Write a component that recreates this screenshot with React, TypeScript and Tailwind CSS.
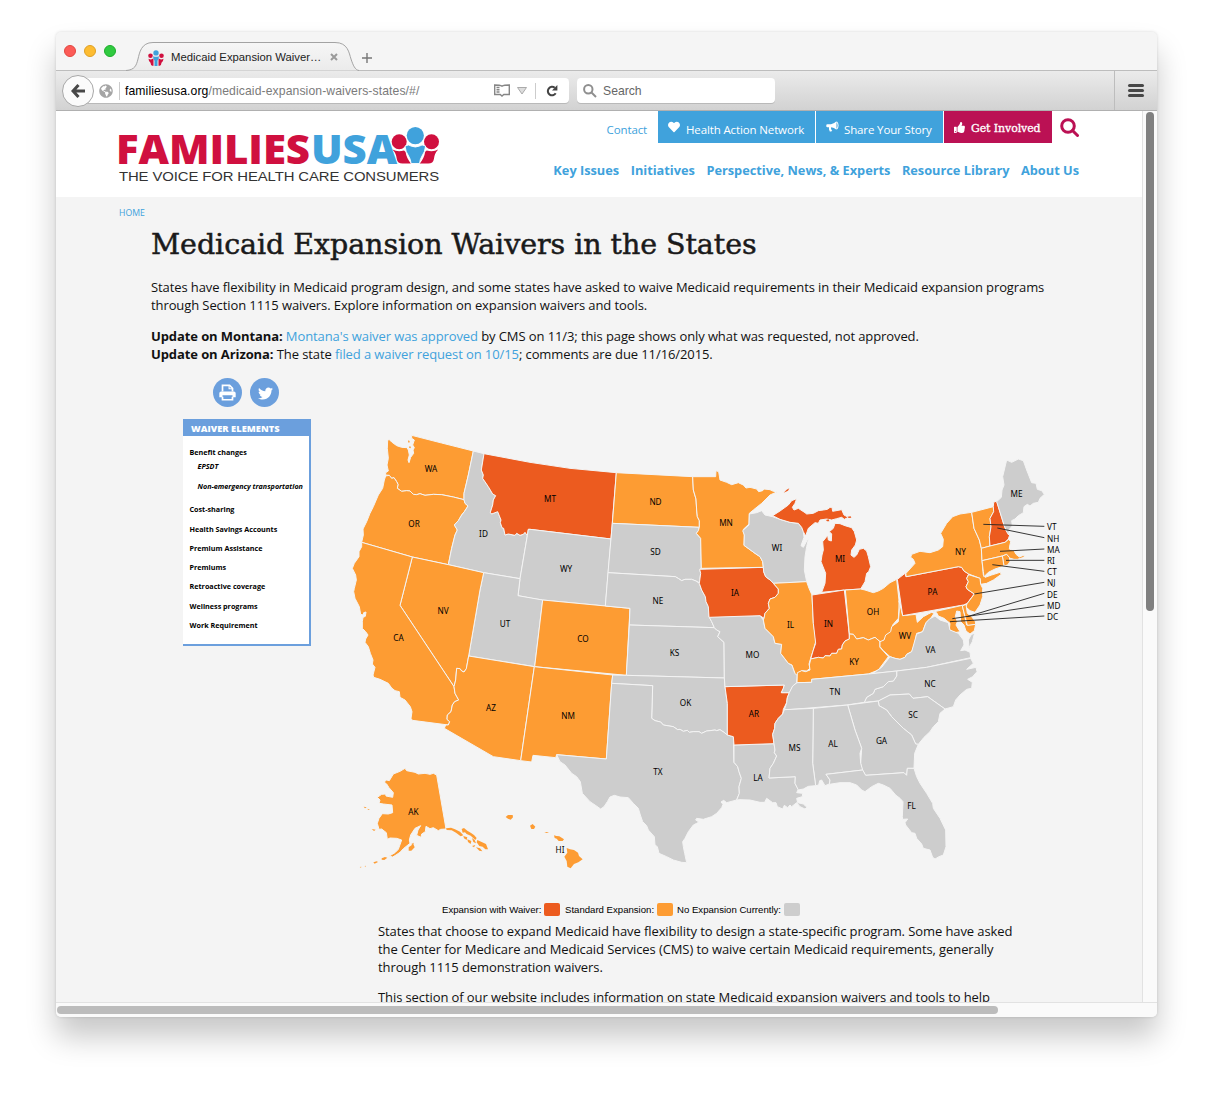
import React from "react";
import { FaHeart, FaThumbsUp, FaTwitter, FaGlobeAmericas } from "react-icons/fa";

type Kind = "waiver" | "standard" | "none";

const FILL: Record<Kind, string> = { waiver: "#ec5b1f", standard: "#fd9c33", none: "#cdcdcd" };

// Map outlines are stored per sheet, in thirds of a pixel from the sheet's origin.
const SHEETS: Record<string, [number, number]> = {
  a: [345, 425],
  b: [345, 590],
  c: [530, 440],
  d: [690, 460],
  e: [880, 450],
  f: [530, 660],
  g: [740, 620],
  h: [350, 760],
};

function toPoints(src: string) {
  let origin = SHEETS.a;
  const out: string[] = [];
  for (const token of src.trim().split(/\s+/)) {
    if (SHEETS[token]) {
      origin = SHEETS[token];
      continue;
    }
    const [x, y] = token.split(",").map(Number);
    out.push(`${(origin[0] + x / 3).toFixed(2)},${(origin[1] + y / 3).toFixed(2)}`);
  }
  return out.join(" ");
}

const STATES: [string, Kind, string][] = [
  ["WA", "standard", "a 128,45 133,44 140,51 155,62 170,67 186,68 190,75 193,90 189,105 192,113 197,97 206,85 204,75 208,68 203,60 208,45 200,40 200,31 290,54 385,78 370,150 357,205 357,224 325,216 290,209 265,208 240,211 225,206 215,209 205,208 195,198 185,197 170,199 157,190 159,178 155,170 147,158 140,160 133,151 122,150 122,143 130,138 126,120 130,100 127,70"],
  ["OR", "standard", "a 122,153 133,151 140,160 147,158 155,170 159,178 157,190 170,199 185,197 195,198 205,208 215,209 225,206 240,211 265,208 290,209 325,216 357,224 360,235 369,243 358,260 350,270 340,287 328,300 337,315 330,330 320,370 310,419 202,396 50,352 55,330 54,312 65,290 75,265 85,245 100,210 113,190 118,165"],
  ["ID", "none", "a 385,78 417,86 409,135 415,150 413,160 430,185 443,207 452,212 445,225 443,240 436,262 440,267 458,260 468,285 466,293 471,308 476,310 480,330 490,327 510,331 515,325 525,331 535,328 540,322 547,332 525,461 416,443 310,419 320,370 330,330 337,315 328,300 340,287 350,270 358,260 369,243 360,235 357,224 357,205 370,150"],
  ["MT", "waiver", "a 417,86 c 0,67 120,85 259,98 243,297 0,268 a 550,313 547,332 540,322 535,328 525,331 515,325 510,331 490,327 480,330 476,310 471,308 466,293 468,285 458,260 440,267 436,262 443,240 445,225 452,212 443,207 430,185 413,160 415,150 409,135"],
  ["WY", "none", "a 550,313 c 0,268 243,297 226,498 38,480 0,474 a 519,512 525,461 547,332"],
  ["UT", "none", "a 416,443 525,461 519,512 c 38,480 14,680 b 371,198 405,0"],
  ["NV", "standard", "a 202,396 310,419 416,443 b 405,0 371,198 364,236 357,246 350,243 345,236 335,235 332,270 327,290 165,46"],
  ["CA", "standard", "a 50,352 202,396 b 165,46 327,290 330,310 341,330 329,335 322,345 318,365 307,375 306,388 314,395 310,405 202,391 198,385 201,365 196,350 180,330 165,322 163,305 150,302 140,294 130,280 105,268 86,262 84,255 90,232 82,222 84,210 76,190 70,170 60,157 62,147 69,135 62,125 52,115 52,95 54,82 61,79 63,66 56,68 55,75 47,73 43,50 30,25 26,5 a 28,490 34,465 32,450 22,430 28,415 42,395 42,380 50,365"],
  ["AZ", "standard", "b 371,198 568,230 527,512 445,500 298,415 302,405 310,405 314,395 306,388 307,375 318,365 322,345 329,335 341,330 330,310 327,290 332,270 335,235 345,236 350,243 357,246 364,236"],
  ["CO", "standard", "c 38,480 300,505 289,706 14,680"],
  ["NM", "standard", "f 13,20 248,45 245,70 229,297 80,284 77,293 9,286 5,306 -28,302"],
  ["ND", "standard", "c 259,98 488,110 490,150 498,177 500,210 502,230 508,242 508,262 247,250"],
  ["SD", "none", "c 247,250 508,262 505,272 499,280 512,295 514,385 509,388 512,400 508,428 498,423 485,418 465,418 455,422 446,416 436,410 234,398"],
  ["NE", "none", "c 234,398 436,410 446,416 455,422 465,418 485,418 498,423 508,430 515,450 526,470 528,485 535,500 537,530 545,545 553,563 298,555 300,505 226,498"],
  ["KS", "none", "c 298,555 553,563 560,570 570,575 563,590 582,607 583,714 289,706"],
  ["OK", "none", "f 248,45 289,46 583,54 585,80 592,130 592,225 582,217 570,209 560,212 555,210 540,212 530,213 515,220 507,215 490,215 478,217 472,211 460,214 450,208 443,209 430,200 400,195 392,186 375,182 365,175 368,77 245,70"],
  ["TX", "none", "f 245,70 368,77 365,175 375,182 392,186 400,195 430,200 443,209 450,208 460,214 472,211 478,217 490,215 507,215 515,220 530,213 540,212 555,210 560,212 570,209 582,217 592,225 610,230 612,307 623,320 627,335 634,355 627,380 628,400 620,420 590,428 581,421 573,426 579,433 575,443 560,460 545,470 520,478 500,475 497,480 507,486 500,490 490,495 475,515 465,535 458,545 460,560 464,580 470,608 455,607 430,600 410,590 387,580 382,560 375,555 373,530 355,510 350,497 338,485 331,465 325,445 310,430 295,413 270,411 253,406 240,411 232,425 222,440 212,447 195,435 180,425 157,400 151,365 140,350 125,340 105,315 90,305 80,284 229,297"],
  ["LA", "none", "f 612,255 g 102,371 105,390 103,398 110,408 100,430 90,445 87,474 166,470 165,490 175,508 170,518 188,520 187,530 170,535 173,548 190,552 201,562 195,567 180,560 170,548 155,560 150,555 143,563 133,556 128,567 112,560 108,548 98,548 80,535 74,547 60,547 30,540 0,539 f 620,420 628,400 627,380 634,355 627,335 623,320 612,307"],
  ["AR", "waiver", "f 585,80 g 133,195 130,205 124,218 148,218 142,233 140,248 130,268 128,282 115,295 105,310 104,325 98,343 102,371 f 612,255 610,230 592,225 592,130"],
  ["MO", "none", "c 537,530 d 210,467 220,480 225,505 250,530 255,550 275,553 272,580 295,610 306,615 315,640 g 172,165 170,188 158,200 148,218 124,218 130,205 133,195 f 585,80 583,54 c 582,607 563,590 570,575 560,570 553,563 545,545"],
  ["IA", "waiver", "c 509,388 d 220,322 221,335 227,350 243,362 250,370 265,387 265,400 255,412 240,417 235,430 238,445 225,460 222,475 210,467 57,472 c 535,500 528,485 526,470 515,450 508,430 512,400"],
  ["MN", "standard", "c 488,110 557,110 558,92 566,95 570,120 590,127 605,134 625,128 640,135 d 168,84 180,82 200,87 206,95 218,92 222,87 240,89 250,94 262,95 240,105 215,130 190,150 178,160 177,192 160,208 163,225 162,256 195,280 210,290 218,305 220,322 34,325 c 512,295 499,280 505,272 508,262 508,242 502,230 500,210 498,177 490,150"],
  ["WI", "none", "d 178,162 200,158 215,152 225,165 248,170 270,178 300,187 325,190 335,202 340,215 342,232 333,257 340,262 357,230 350,260 345,290 343,330 350,365 250,370 243,362 227,350 221,335 220,322 218,305 210,290 195,280 162,256 163,225 158,212 177,195"],
  ["MI", "waiver", "d 248,167 270,153 295,135 305,122 320,116 315,130 307,142 312,150 325,145 345,158 350,162 370,160 385,152 400,150 412,148 420,142 426,142 428,154 455,149 462,165 475,172 463,178 455,172 440,176 425,180 410,177 390,180 385,190 375,188 355,205 347,228 340,215 335,202 325,190 300,187 270,178"],
  ["MI", "waiver", "d 395,397 405,370 407,340 393,305 396,285 400,270 398,245 410,230 413,225 415,240 424,243 425,222 418,215 430,205 435,190 450,191 465,197 485,203 493,215 500,240 496,255 485,270 483,285 492,292 500,285 508,268 520,265 530,273 535,290 542,320 536,335 530,340 525,365 512,387 465,390"],
  ["IL", "standard", "d 250,370 350,365 357,385 366,405 370,490 376,525 377,545 370,570 362,595 357,612 360,625 350,633 335,632 320,645 315,640 306,615 295,610 272,580 275,553 255,550 250,530 225,505 220,480 222,475 225,460 238,445 235,430 240,417 255,412 265,400 265,387"],
  ["IN", "waiver", "d 366,405 463,390 478,525 478,537 465,543 457,555 455,567 445,568 440,580 425,580 420,588 405,587 400,594 385,592 362,597 370,570 377,550 370,490"],
  ["OH", "standard", "d 466,390 512,387 525,390 550,398 565,393 580,385 600,368 620,358 628,430 625,475 608,495 606,515 590,530 580,545 570,545 555,532 535,540 520,533 500,537 490,523 478,522"],
  ["KY", "standard", "d 362,597 385,592 400,594 405,587 420,588 425,580 440,580 445,568 455,567 457,555 465,543 478,537 478,522 490,523 500,537 520,533 535,540 555,532 570,545 570,562 595,590 g 415,150 385,162 215,178 215,187 171,188 172,158 185,152 197,155 210,150 208,135 212,118"],
  ["WV", "standard", "e 57,452 68,497 108,493 112,517 130,500 145,492 155,487 162,490 150,508 138,518 128,545 110,550 g 523,75 515,95 500,103 495,112 480,118 465,115 450,110 430,92 420,80 420,65 432,60 437,45 452,35 455,20 475,5 e 58,480"],
  ["PA", "waiver", "e 52,388 75,370 78,380 235,350 245,352 252,363 266,372 260,385 265,395 258,410 262,418 283,432 275,442 262,460 250,465 68,497"],
  ["NY", "standard", "e 78,380 78,370 105,340 100,328 92,322 95,313 120,304 150,308 175,300 188,290 190,268 182,250 200,220 218,200 240,192 275,187 282,235 298,270 304,295 306,332 310,375 315,382 335,375 360,367 364,373 340,390 320,400 302,403 300,385 266,372 252,363 245,352 235,350"],
  ["VT", "standard", "e 275,187 340,170 341,185 330,205 333,230 328,260 330,288 304,295 298,270 282,235"],
  ["NH", "waiver", "e 340,170 341,157 350,153 372,225 380,245 389,255 385,267 375,277 330,288 328,260 333,230 330,205 341,185"],
  ["ME", "none", "e 350,155 364,142 366,120 372,105 368,80 380,30 395,37 415,27 430,32 440,60 455,98 468,100 472,118 485,122 493,133 480,145 475,157 460,160 450,168 442,163 432,170 430,188 415,197 405,207 395,212 397,228 388,238 386,255 380,245 372,225"],
  ["MA", "standard", "e 304,295 330,288 375,277 386,268 392,275 389,288 388,297 402,302 408,313 418,321 433,315 432,322 412,328 402,328 388,324 380,313 367,318 306,332"],
  ["RI", "standard", "e 367,318 380,313 388,322 390,335 383,345 372,348"],
  ["CT", "standard", "e 306,332 367,318 372,348 345,357 325,367 312,380 310,365"],
  ["NJ", "standard", "e 266,374 300,385 302,403 308,415 308,440 300,465 285,487 270,482 257,470 262,460 283,432 262,418 258,410 265,395 260,385"],
  ["MD", "standard", "e 155,487 247,466 260,525 287,523 283,542 270,552 258,543 252,525 242,515 240,485 230,483 226,500 232,515 228,525 240,545 225,548 208,540 210,520 192,505 175,498 170,488"],
  ["DE", "standard", "e 247,468 258,463 262,490 275,500 286,515 287,523 262,526"],
  ["VA", "none", "g 397,161 425,142 450,110 465,115 480,118 495,112 500,103 515,95 530,42 548,35 558,8 568,-3 585,-12 600,0 625,8 630,30 655,40 670,60 672,75 662,92 675,90 690,97 692,113 560,142 470,153"],
  ["VA", "none", "g 693,45 704,38 697,65 687,83 685,60"],
  ["NC", "none", "g 692,115 700,130 680,148 708,142 711,155 698,170 683,178 697,187 695,205 680,208 660,225 647,240 640,260 615,267 563,230 519,235 508,222 450,225 415,243 373,247 380,232 400,220 405,208 430,200 445,185 460,183 470,168 470,153 560,142"],
  ["TN", "none", "g 158,198 171,188 215,187 215,178 385,162 470,153 470,168 460,183 445,185 430,200 405,208 400,220 380,232 373,247 320,255 133,270 140,248 142,233 148,218"],
  ["SC", "none", "g 415,243 450,225 508,222 519,235 563,230 615,267 600,280 595,305 580,320 570,335 552,352 535,373 527,372 515,345 490,325 465,300 455,290 440,270 417,257"],
  ["GA", "none", "g 323,255 415,243 417,257 440,270 455,290 465,300 490,325 515,345 527,372 535,373 524,400 522,445 502,445 500,466 492,458 377,466 366,448 362,430 365,385 345,330"],
  ["AL", "none", "g 220,265 323,255 345,330 365,385 360,400 362,430 368,450 258,463 270,480 268,492 255,497 245,480 239,482 236,495 227,497 218,430"],
  ["MS", "none", "g 133,269 220,265 218,430 227,497 205,499 190,507 175,510 165,490 166,470 87,474 90,445 100,430 110,408 103,398 105,390 102,371 98,343 104,325 105,310 115,295 128,282"],
  ["FL", "none", "g 258,463 368,450 377,466 492,458 500,466 502,445 522,445 530,470 540,490 560,520 578,550 580,565 600,595 617,630 618,680 610,705 597,710 585,717 578,712 570,690 550,685 545,672 530,655 525,640 515,638 497,615 495,608 503,597 488,598 487,590 489,545 480,535 467,525 450,505 430,495 415,490 395,500 375,515 365,510 350,495 330,488 300,488 268,493 270,480"],
  ["AK", "standard", "h 260,45 288,207 272,208 265,212 250,203 240,206 228,199 226,215 215,222 213,232 200,226 204,210 212,197 195,205 182,225 178,240 180,250 160,266 150,277 138,285 128,291 118,288 135,278 145,268 155,240 140,235 120,234 112,238 109,218 95,207 87,208 82,190 87,175 97,161 115,162 128,158 126,135 100,132 87,130 90,120 82,112 95,103 107,102 108,108 128,112 130,98 117,83 110,72 102,66 110,60 118,62 130,42 150,34 165,25 170,32 195,37 205,42 225,40 240,43 250,40"],
];

const ISLANDS: [Kind, string][] = [
  ["standard", "a 190,46 194,48 193,53 189,52"],
  ["standard", "a 194,63 198,66 196,70 192,68"],
  ["waiver", "d 281,98 290,89 298,85 294,92"],
  ["waiver", "d 473,170 482,169 484,173 476,174"],
  ["waiver", "d 408,180 416,178 418,184 411,184"],
  ["standard", "h 176,262 190,252 194,262 184,272 176,272"],
  ["standard", "h 184,252 192,248 188,256"],
  ["standard", "h 95,295 105,291 112,293 103,300 95,299"],
  ["standard", "h 70,307 80,304 84,306 74,311"],
  ["standard", "h 44,318 47,317 46,322"],
  ["standard", "h 29,321 34,320 33,323"],
  ["standard", "h 41,140 50,142 45,145"],
  ["standard", "h 52,146 60,149 55,150"],
  ["standard", "h 65,207 77,209 72,213"],
  ["standard", "h 288,205 303,203 315,208 330,215 340,226 332,229 318,218 305,211 290,210"],
  ["standard", "h 335,207 342,204 352,212 362,218 372,225 380,234 376,240 362,227 350,222 345,217 338,218"],
  ["standard", "h 340,228 352,232 350,240 342,235"],
  ["standard", "h 352,238 364,243 362,252 354,246"],
  ["standard", "h 366,234 374,240 378,250 370,246"],
  ["standard", "h 382,240 395,246 408,252 414,268 406,268 398,260 388,258 380,247"],
  ["standard", "h 366,258 376,255 372,262"],
  ["standard", "h 378,262 390,265 397,274 388,272"],
  ["standard", "h 467,171 474,165 488,165 489,172 482,179 474,176"],
  ["standard", "h 540,197 548,192 556,200 552,207 544,207"],
  ["standard", "h 583,216 597,216 590,219"],
  ["standard", "h 612,226 619,228 628,229 642,238 638,243 626,243 620,236 614,234"],
  ["standard", "h 650,264 660,268 672,270 684,278 687,288 698,298 685,307 672,312 662,325 652,320 650,303 643,290 652,278"],
];

const LABELS: [string, number, number][] = [
  ["WA", 431, 469], ["OR", 414, 524], ["ID", 483.5, 534], ["MT", 550, 499], ["WY", 566, 569], ["UT", 505, 624],
  ["NV", 443, 611], ["CA", 398.5, 638], ["AZ", 491, 708], ["CO", 583, 639], ["NM", 568, 716], ["ND", 655.5, 502],
  ["SD", 655.5, 552], ["NE", 658, 601], ["KS", 674.5, 653], ["OK", 685.5, 703], ["TX", 658, 772], ["LA", 758, 778],
  ["AR", 754, 714], ["MO", 752.5, 655], ["IA", 735, 593], ["MN", 726, 523], ["WI", 777, 548], ["MI", 840, 559],
  ["IL", 790.5, 625], ["IN", 828.5, 624], ["OH", 873, 612], ["KY", 854, 662], ["WV", 905, 636], ["PA", 932.5, 592],
  ["NY", 960.5, 552], ["ME", 1016.5, 494], ["VA", 930.5, 650], ["NC", 930, 684], ["TN", 835, 692], ["SC", 913, 715],
  ["GA", 881.5, 741], ["AL", 833, 744], ["MS", 794.5, 748], ["FL", 911.5, 806], ["AK", 413.5, 812], ["HI", 560, 850],
];

const SIDE_LABELS: [string, number][] = [
  ["VT", 527], ["NH", 539], ["MA", 550], ["RI", 561], ["CT", 572], ["NJ", 583], ["DE", 595], ["MD", 606], ["DC", 617],
];

const LEADERS: string[] = [
  "e 310,223 493,229", "e 352,234 493,263", "e 360,304 493,297", "e 378,331 493,331", "e 337,344 493,364",
  "e 283,432 493,397", "e 262,500 493,430", "e 217,506 493,465", "e 210,515 493,498",
];

function StateMap() {
  return (
    <svg width="780" height="460" viewBox="290 420 780 460" className="block">
      <g strokeLinejoin="round">
        {STATES.map(([name, kind, pts], i) => (
          <polygon key={name + i} points={toPoints(pts)} fill={FILL[kind]} stroke="#f4f4f4" strokeWidth="1" />
        ))}
        {ISLANDS.map(([kind, pts], i) => (
          <polygon key={i} points={toPoints(pts)} fill={FILL[kind]} />
        ))}
      </g>
      {LEADERS.map((pts) => (
        <polyline key={pts} points={toPoints(pts)} stroke="#222" strokeWidth="0.9" fill="none" />
      ))}
      <g className="font-['Noto_Sans',sans-serif] text-[8.2px]" fill="#000">
        {LABELS.map(([t, x, y]) => (
          <text key={t} x={x} y={y + 3} textAnchor="middle">{t}</text>
        ))}
        {SIDE_LABELS.map(([t, y]) => (
          <text key={t} x={1047} y={y + 3}>{t}</text>
        ))}
      </g>
    </svg>
  );
}

function FamilyMark() {
  return (
    <g>
      <g fill="#d0103f">
        <circle cx="8.2" cy="14.700" r="7.500" />
        <circle cx="40.500" cy="14.700" r="7.500" />
        <path d="M1.500 22.500q5 2.800 11.500 1l1.500 1.200q1 6.500 5.500 11.800h-8.500q-5 0-5.700-4.500-.5-5.500-4.300-9.500z" />
        <path d="M47.200 22.500q-5 2.800-11.500 1l-1.500 1.200q-1 6.500-5.500 11.800h8.500q5 0 5.700-4.500.5-5.500 4.300-9.500z" />
      </g>
      <circle cx="24.300" cy="8.600" r="9.600" fill="#fff" />
      <circle cx="24.300" cy="8.600" r="8.600" fill="#40a2dc" />
      <path d="M14 19q4-2 6 0 4.300 2 8.600 0 2-2 6 0-.6 6-3.600 10-2 3-2.500 7.500h-8.400q-.5-4.500-2.500-7.500-3-4-3.600-10z" fill="#40a2dc" stroke="#fff" strokeWidth=".9" />
    </g>
  );
}

function Favicon() {
  return (
    <svg viewBox="0 0 16 16" className="size-4">
      <g fill="#d0103f">
        <circle cx="2.500" cy="5.800" r="2.300" />
        <circle cx="13.500" cy="5.800" r="2.300" />
        <path d="M.5 8.800q3 1.500 5-.5v7.500H4.200q-1.500-.4-1.700-3Q.5 11 .5 8.800zM15.500 8.800q-3 1.500-5-.5v7.500h1.300q1.500-.4 1.700-3 2-1.800 2-4z" />
      </g>
      <g fill="#40a2dc">
        <circle cx="8" cy="2.900" r="2.700" />
        <path d="M5 6.200q3 1 6 0-.2 3-1.500 4.500V16h-3v-5.300Q5.200 9.200 5 6.200z" />
      </g>
    </svg>
  );
}

function TabStrip() {
  return (
    <div className="relative h-[39px] border-b border-[#bdbdbd] bg-[#f5f5f5]">
      <div className="flex h-full">
        <div className="flex w-[70px] gap-2 pt-[13px] pl-2">
          <span className="size-3 rounded-full border border-[#e2463f] bg-[#fc5b57]" />
          <span className="size-3 rounded-full border border-[#dfa023] bg-[#fdbc31]" />
          <span className="size-3 rounded-full border border-[#1dad2b] bg-[#30ca40]" />
        </div>
        <div className="relative h-[39px] w-[233px]">
          <svg viewBox="0 0 233 39" className="absolute inset-0 h-[39px] w-[233px]">
            <defs>
              <linearGradient id="tab" x1="0" y1="0" x2="0" y2="1">
                <stop offset="0" stopColor="#f6f6f6" />
                <stop offset="1" stopColor="#ebebeb" />
              </linearGradient>
            </defs>
            <path d="M0 38.500C9 38 10.500 33 12 27S15 10.500 27 10.500H209C222 10.500 223 21 225 27s4 11 8 11.500" fill="url(#tab)" stroke="#a3a3a3" />
          </svg>
          <div className="relative flex h-full items-center pt-[12px] pl-[22px]">
            <Favicon />
            <span className="ml-[7px] w-[156px] font-['Liberation_Sans',Arial,sans-serif] text-[11.3px] whitespace-nowrap text-[#222]">Medicaid Expansion Waiver…</span>
            <svg viewBox="0 0 8 8" className="mb-[2px] ml-[3px] size-2" stroke="#9a9a9a" strokeWidth="2"><path d="M1 1l6 6M7 1l-6 6" /></svg>
          </div>
        </div>
        <svg viewBox="0 0 10 10" className="mt-[21px] ml-[3px] size-[10px]" stroke="#777" strokeWidth="1.4"><path d="M5 0v10M0 5h10" /></svg>
      </div>
    </div>
  );
}

function Toolbar() {
  return (
    <div className="flex h-[40px] items-center border-b border-[#b0b0b0] bg-linear-to-b from-[#ebebeb] to-[#d2d2d2] font-['Liberation_Sans',Arial,sans-serif]">
      <div className="relative z-10 ml-[6px] flex size-[32px] items-center justify-center rounded-full border border-[#a8a8a8] bg-[#fbfbfb]">
        <svg viewBox="0 0 14 14" className="size-[14px]" fill="none" stroke="#484848" strokeWidth="3"><path d="M7.500 1L2 7l5.500 6M2.500 7H14" /></svg>
      </div>
      <div className="-ml-[8px] flex h-[25px] w-[483px] items-center rounded-r bg-white pl-[13px] shadow-[0_1px_0_#b9b9b9]">
        <FaGlobeAmericas className="size-[14px] text-[#a5a5a5]" />
        <span className="ml-[6px] h-[18px] w-px bg-[#ccc]" />
        <span className="ml-[5px] w-[369px] pt-[2px] text-[12.2px] tracking-[0.1px] whitespace-nowrap text-[#7b7b7b]"><span className="text-black">familiesusa.org</span>/medicaid-expansion-waivers-states/#/</span>
        <svg viewBox="0 0 16 13" className="h-[13px] w-[16px]" fill="none" stroke="#868686" strokeWidth="1.400"><path d="M8 2.200Q6 1 .7 1v9.500h5.500L8 12l1.800-1.500h5.500V1Q10 1 8 2.200zM2.500 3.500h3M2.500 5.700h3M2.500 8h3" /></svg>
        <svg viewBox="0 0 10 8" className="ml-[7px] h-[8px] w-[10px]"><path d="M.5.500h9L5 7z" fill="#ddd" stroke="#aaa" /></svg>
        <span className="ml-[8px] h-[16px] w-px bg-[#ccc]" />
        <svg viewBox="0 0 13 13" className="ml-[10px] size-[12px]"><path d="M10.500 9A4.600 4.600 0 1 1 9.500 3" fill="none" stroke="#444" strokeWidth="2.200" /><path d="M12.300 0v6H6.500z" fill="#444" /></svg>
      </div>
      <div className="ml-[8px] flex h-[25px] w-[198px] items-center rounded bg-white pl-[6px] shadow-[0_1px_0_#b9b9b9]">
        <svg viewBox="0 0 14 14" className="size-[14px]" fill="none" stroke="#8f8f8f" strokeWidth="2"><circle cx="5.300" cy="5.300" r="4.200" /><path d="M8.500 8.500l4.500 4.500" /></svg>
        <span className="ml-[6px] pt-[2px] text-[12.2px] text-[#666]">Search</span>
      </div>
      <div className="ml-auto flex h-[39px] w-[43px] items-center justify-center border-l border-[#bdbdbd]">
        <div className="flex w-[16px] flex-col gap-[2px]">
          <span className="h-[3px] rounded bg-[#484848]" /><span className="h-[3px] rounded bg-[#484848]" /><span className="h-[3px] rounded bg-[#484848]" />
        </div>
      </div>
    </div>
  );
}

function SiteHeader() {
  return (
    <header className="flex h-[86px] justify-between bg-white pr-[63px] pl-[63px]">
      <svg viewBox="0 0 322 60" className="mt-[14px] h-[60px] w-[322px] overflow-visible">
        <g className="font-['Open_Sans',sans-serif] text-[41px] font-extrabold">
          <text x="-3" y="39" fill="#d0103f" textLength="194" lengthAdjust="spacingAndGlyphs">FAMILIES</text>
          <text x="192" y="39" fill="#40a2dc" textLength="86" lengthAdjust="spacingAndGlyphs">USA</text>
        </g>
        <g transform="translate(272 2)"><FamilyMark /></g>
        <text x="0" y="55.500" fill="#333" textLength="320" lengthAdjust="spacingAndGlyphs" className="font-['Liberation_Sans',Arial,sans-serif] text-[13px]">THE VOICE FOR HEALTH CARE CONSUMERS</text>
      </svg>
      <div className="flex flex-col items-end font-['Open_Sans',sans-serif]">
        <div className="flex h-[32px] items-center text-[11.500px] tracking-[-0.13px] whitespace-nowrap text-white">
          <span className="mr-[11px] pt-[5px] text-[#40a2dc]">Contact</span>
          <div className="flex h-full w-[157px] items-center bg-[#40a2dc] pl-[10px]">
            <FaHeart className="size-[12px]" /><span className="ml-[6px] pt-[5px]">Health Action Network</span>
          </div>
          <div className="ml-px flex h-full w-[127px] items-center bg-[#40a2dc] pl-[10px]">
            <svg viewBox="0 0 13 12" className="h-[12px] w-[13px]" fill="#fff">
              <path d="M.3 4.200Q.3 3.300 1.300 3.300H5q3-.6 5.500-3.100v8.600Q8 6.500 5.300 6.200q-.8.900 0 2 .2 1 1 1.600-.9 1.200-2.500.6Q2.600 8 3 6.200H1.300q-1 0-1-.9zM11 .5q1.600 1.500 1.600 4T11 8.500l-.4-.9q1-1 1-3.100t-1-3.100z" />
            </svg>
            <span className="ml-[5px] pt-[5px]">Share Your Story</span>
          </div>
          <div className="ml-px flex h-full w-[108px] items-center bg-[#bb1154] pl-[10px]">
            <FaThumbsUp className="size-[11px]" /><span className="ml-[6px] pt-[4px] font-['DejaVu_Serif',serif] text-[11px] tracking-[-0.1px] [-webkit-text-stroke:0.3px_white]">Get Involved</span>
          </div>
          <svg viewBox="0 0 19 19" className="ml-[8px] size-[19px]" fill="none" stroke="#bb1154" strokeWidth="3"><circle cx="8" cy="8" r="6.300" /><path d="M12.500 12.500l5 5" strokeLinecap="round" /></svg>
        </div>
        <nav className="mt-[18px] flex gap-[11.500px] text-[12.770px] leading-[18px] font-bold tracking-normal whitespace-nowrap text-[#40a2dc]">
          <a>Key Issues</a><a>Initiatives</a><a>Perspective, News, &amp; Experts</a><a>Resource Library</a><a>About Us</a>
        </nav>
      </div>
    </header>
  );
}

function Sidebar() {
  return (
    <aside className="w-[128px] font-['Open_Sans',sans-serif]">
      <div className="flex gap-[8px] pl-[30px]">
        <span className="flex size-[29px] items-center justify-center rounded-full bg-[#6b9fdd]">
          <svg viewBox="0 0 16 16" className="size-[17px]" fill="none" stroke="#fff" strokeWidth="1.600">
            <path d="M3.300 7V1.300h6.700l2.700 2.700v3M3.300 12v2.800h9.400V12" />
            <path d="M.3 12.500V8.700Q.3 7 2 7h12q1.700 0 1.700 1.700v3.800h-3v-2H3.300v2z" fill="#fff" stroke="none" />
            <path d="M9.500 1.500v3h3" strokeWidth="1" />
          </svg>
        </span>
        <span className="flex size-[29px] items-center justify-center rounded-full bg-[#6b9fdd] text-white"><FaTwitter className="mt-px ml-px size-[15px]" /></span>
      </div>
      <div className="mt-[12px] h-[227px] border-r-2 border-b-2 border-[#6b9fdd] bg-white text-[7.200px] leading-[10px] font-bold whitespace-nowrap text-black">
        <div className="h-[17px] bg-[#6b9fdd] pl-[8px] text-[9.300px] leading-[19px] font-extrabold tracking-[0.030px] text-white">WAIVER ELEMENTS</div>
        <ul className="pt-[11px] pl-[6.500px]">
          <li>Benefit changes</li>
          <li className="mt-[4px] pl-[8px] italic">EPSDT</li>
          <li className="mt-[10px] pl-[8px] italic">Non-emergency transportation</li>
          <li className="mt-[13px]">Cost-sharing</li>
          <li className="mt-[10px]">Health Savings Accounts</li>
          <li className="mt-[9px]">Premium Assistance</li>
          <li className="mt-[9px]">Premiums</li>
          <li className="mt-[9px]">Retroactive coverage</li>
          <li className="mt-[10px]">Wellness programs</li>
          <li className="mt-[9px]">Work Requirement</li>
        </ul>
      </div>
    </aside>
  );
}

function Legend() {
  return (
    <div className="flex h-[13px] items-center pl-[386px] font-['Liberation_Sans',Arial,sans-serif] text-[9.600px] whitespace-nowrap text-black">
      <span className="w-[102px]">Expansion with Waiver:</span>
      <span className="h-[13px] w-[16px] rounded-[2px] bg-[#ec5b1f]" />
      <span className="ml-[5px] w-[92px]">Standard Expansion:</span>
      <span className="h-[13px] w-[16px] rounded-[2px] bg-[#fd9c33]" />
      <span className="ml-[4px] w-[107px]">No Expansion Currently:</span>
      <span className="h-[13px] w-[16px] rounded-[2px] bg-[#cdcdcd]" />
    </div>
  );
}

export default function App() {
  return (
    <div className="h-[1097px] w-[1213px] overflow-hidden bg-white pt-[32px] pl-[56px]">
      <div className="h-[985px] w-[1101px] overflow-hidden rounded-[5px] bg-[#f4f4f4] shadow-[0_20px_30px_rgba(0,0,0,0.22),0_0_3px_rgba(0,0,0,0.15)]">
        <TabStrip />
        <Toolbar />
        <div className="flex h-[891px]">
          <div className="h-full w-[1086px] overflow-hidden font-['Open_Sans',sans-serif] text-[13px] leading-[18px] tracking-[-0.096px] whitespace-nowrap text-[#111]">
            <SiteHeader />
            <div className="pt-[10px] pl-[63px] text-[8.700px] leading-[12px] tracking-normal text-[#40a2dc]">HOME</div>
            <h1 className="mt-[7px] pl-[95px] font-['DejaVu_Serif',serif] text-[28.500px] leading-[38px] tracking-[-0.060px] text-[#1a1a1a] [-webkit-text-stroke:0.5px_#1a1a1a]">Medicaid Expansion Waivers in the States</h1>
            <p className="mt-[14px] pl-[95px]">States have flexibility in Medicaid program design, and some states have asked to waive Medicaid requirements in their Medicaid expansion programs<br />through Section 1115 waivers. Explore information on expansion waivers and tools.</p>
            <p className="mt-[13px] pl-[95px]"><b>Update on Montana:</b> <span className="text-[#40a2dc]">Montana's waiver was approved</span> by CMS on 11/3; this page shows only what was requested, not approved.<br /><b>Update on Arizona:</b> The state <span className="text-[#40a2dc]">filed a waiver request on 10/15</span>; comments are due 11/16/2015.</p>
            <div className="mt-[15px] flex pl-[127px] tracking-normal">
              <Sidebar />
              <div className="-ml-[21px] mt-[42px]"><StateMap /></div>
            </div>
            <div className="mt-[23px] tracking-normal"><Legend /></div>
            <p className="mt-[6px] pl-[322px]">States that choose to expand Medicaid have flexibility to design a state-specific program. Some have asked<br />the Center for Medicare and Medicaid Services (CMS) to waive certain Medicaid requirements, generally<br />through 1115 demonstration waivers.</p>
            <p className="mt-[12px] pl-[322px]">This section of our website includes information on state Medicaid expansion waivers and tools to help</p>
          </div>
          <div className="h-full w-[15px] border-l border-[#e2e2e2] bg-[#fafafa] pt-px pl-[3px]">
            <div className="h-[499px] w-[8px] rounded-full bg-[#808080]" />
          </div>
        </div>
        <div className="h-[15px] border-t border-[#e2e2e2] bg-[#fafafa] pt-[3px] pl-px">
          <div className="h-[8px] w-[941px] rounded-full bg-[#bcbcbc]" />
        </div>
      </div>
    </div>
  );
}
